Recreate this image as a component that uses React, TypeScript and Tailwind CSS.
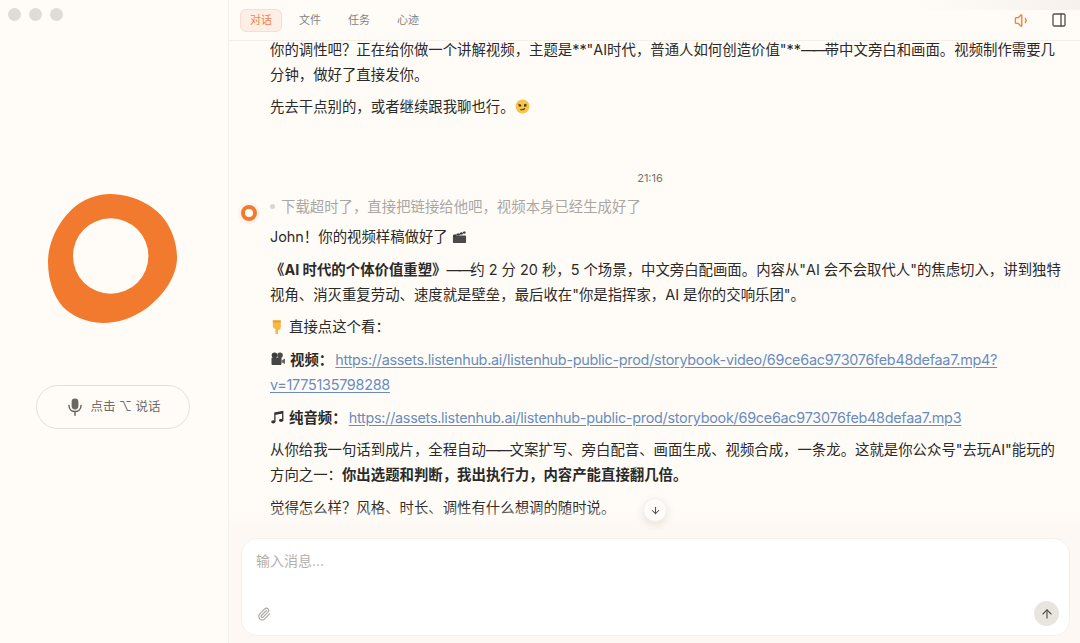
import { ArrowDown, ArrowUp, PanelRight, Paperclip, Volume1 } from "lucide-react";

const tabs = ["对话", "文件", "任务", "心迹"];

function Smirk() {
  return (
    <svg viewBox="0 0 16 16" className="inline-block h-[15px] w-[15px] align-[-2px]">
      <circle cx="8" cy="8" r="7.4" fill="#f7c548" />
      <path d="M3.6 5.6l2.6.6M9.6 6.2l2.8-.6" stroke="#6b4a1c" strokeWidth="1.1" fill="none" />
      <path d="M4 7.2h2.6M9.6 7.2h2.6" stroke="#4a3214" strokeWidth="1.4" />
      <path d="M5.6 11.2c2 .5 3.8.2 5-1.2" stroke="#4a3214" strokeWidth="1.1" fill="none" />
    </svg>
  );
}

function Clapper() {
  return (
    <svg viewBox="0 0 16 16" className="inline-block h-[15px] w-[15px] align-[-2px]">
      <rect x="1" y="7" width="14" height="8" rx="1" fill="#4a4a4a" />
      <path d="M1 6.4l13-4 .7 2.2-13 4z" fill="#3a3a3a" />
      <path d="M4 5.5l1.6 1.6M7.4 4.4L9 6M10.8 3.4l1.6 1.6" stroke="#ddd" strokeWidth="1" />
    </svg>
  );
}

function PointDown() {
  return (
    <svg viewBox="0 0 16 16" className="inline-block h-[15px] w-[15px] align-[-2px]">
      <path d="M3 1.5h8.5v7l-.5 3H8.6V15a1.4 1.4 0 0 1-2.8 0v-4L3 8.5z" fill="#f8b840" />
      <path d="M3 1.5h8.5v2H3z" fill="#e89c2c" />
    </svg>
  );
}

function Camera() {
  return (
    <svg viewBox="0 0 16 16" className="inline-block h-[16px] w-[16px] align-[-2px]">
      <circle cx="4.5" cy="4.2" r="2.8" fill="#3d3d3d" />
      <circle cx="10" cy="4.2" r="2.8" fill="#4a4a4a" />
      <rect x="1.5" y="6.6" width="10" height="7.4" rx="1" fill="#454545" />
      <path d="M11.5 9.4l3.5-1.8v5.4l-3.5-1.8z" fill="#666" />
    </svg>
  );
}

function Note() {
  return (
    <svg viewBox="0 0 16 16" className="inline-block h-[15px] w-[15px] align-[-2px]">
      <path d="M5.2 12.4V3.2l8.4-1.6v9.2" stroke="#333" strokeWidth="1.4" fill="none" />
      <path d="M5.2 3.2l8.4-1.6v2.2L5.2 5.4z" fill="#333" />
      <ellipse cx="3.5" cy="12.6" rx="2.2" ry="1.8" fill="#333" />
      <ellipse cx="11.8" cy="11" rx="2.2" ry="1.8" fill="#333" />
    </svg>
  );
}

function MicIcon() {
  return (
    <svg viewBox="0 0 14 18" className="h-[18px] w-[14px] text-[#6a6763]">
      <rect x="3.6" y="0.5" width="6.8" height="11" rx="3.4" fill="currentColor" />
      <path d="M1 7.6c0 3.6 2.6 6 6 6s6-2.4 6-6" stroke="currentColor" strokeWidth="1.5" fill="none" strokeLinecap="round" />
      <path d="M7 13.6v3.6" stroke="currentColor" strokeWidth="1.5" strokeLinecap="round" />
    </svg>
  );
}

function Blob() {
  return (
    <svg viewBox="0 0 130 130" className="h-[130px] w-[130px]">
      <path
        fillRule="evenodd"
        fill="#f27a2f"
        d="M62 0C88 0 110 14 119 29C126 41 129 52 129 64C129 82 116 101 99 114C85 124 70 129 55 129C37 129 22 120 15 113C5 102 0 85 0 68C0 47 12 24 29 11C39 4 50 0 62 0ZM62.7 24.3A37.7 37.7 0 1 0 62.7 99.7A37.7 37.7 0 1 0 62.7 24.3Z"
      />
    </svg>
  );
}

function Dash() {
  return <span className="tracking-[-2.5px]">——</span>;
}

export default function App() {
  return (
    <div className="flex h-[643px] w-[1080px] overflow-hidden bg-[#fffcf8] font-['Inter','Noto_Sans_CJK_SC',sans-serif] text-[14.4px] leading-[25.4px] text-[#2b2a28]">
      <aside className="flex w-[229px] shrink-0 flex-col border-r border-[#f3efe9]">
        <div className="flex gap-[8px] pl-[8px] pt-[8px]">
          <span className="h-[13px] w-[13px] rounded-full bg-[#dfdcd8]" />
          <span className="h-[13px] w-[13px] rounded-full bg-[#dfdcd8]" />
          <span className="h-[13px] w-[13px] rounded-full bg-[#dfdcd8]" />
        </div>
        <div className="flex flex-1 flex-col items-center pr-[3px] pt-[173px]">
          <Blob />
          <button
            type="button"
            className="mt-[61px] flex h-[44px] w-[154px] items-center justify-center gap-[9px] rounded-full border border-[#e4e1db] pl-[3px] text-[12.5px] text-[#6e6b67]"
          >
            <MicIcon />
            <span>点击 ⌥ 说话</span>
          </button>
        </div>
      </aside>

      <main className="relative flex min-w-0 flex-1 flex-col">
        <div className="pointer-events-none absolute right-0 top-0 h-[10px] w-[170px] bg-gradient-to-l from-[#f6f1ed] to-transparent" />
        <header className="flex h-[41px] shrink-0 items-center justify-between border-b border-[#f3efe9] pl-[11px] pr-[13px]">
          <nav className="flex gap-[7px]">
            {tabs.map((tab, index) => (
              <button
                key={tab}
                type="button"
                className={`h-[23px] w-[42px] rounded-md border text-[11px] leading-none ${
                  index === 0 ? "border-[#f8ddd0] bg-[#fdeee6] text-[#ee8550]" : "border-transparent text-[#85827e]"
                }`}
              >
                {tab}
              </button>
            ))}
          </nav>
          <div className="flex items-center gap-[20px]">
            <Volume1 size={17} className="text-[#f0853f]" />
            <PanelRight size={16} className="text-[#55524e]" />
          </div>
        </header>

        <section className="min-h-0 flex-1 overflow-hidden pl-[41px] pr-[18px]">
          <div className="-mt-[4.5px] flex flex-col gap-[6.6px]">
            <p>你的调性吧？正在给你做一个讲解视频，主题是**"AI时代，普通人如何创造价值"**<Dash />带中文旁白和画面。视频制作需要几分钟，做好了直接发你。</p>
            <p>先去干点别的，或者继续跟我聊也行。<Smirk /></p>
          </div>

          <p className="mt-[51px] pr-[32px] text-center text-[11px] leading-[16px] text-[#777470]">21:16</p>

          <div className="relative mt-[7.5px] flex flex-col gap-[7px]">
            <span className="absolute -left-[32px] top-[8px] flex h-[22px] w-[22px] items-center justify-center rounded-full bg-[#fdf3ec]">
              <span className="h-[16px] w-[16px] rounded-full border-[4px] border-[#f27a2f] bg-white" />
            </span>
            <p className="-mb-[2px] flex items-center text-[#aaa7a3]">
              <span className="mr-[6px] h-[5px] w-[5px] rounded-full bg-[#d9d6d2]" />
              下载超时了，直接把链接给他吧，视频本身已经生成好了
            </p>
            <p>John！你的视频样稿做好了 <Clapper /></p>
            <p>
              <strong>《AI 时代的个体价值重塑》</strong><Dash />约 2 分 20 秒，5 个场景，中文旁白配画面。内容从"AI 会不会取代人"的焦虑切入，讲到独特视角、消灭重复劳动、速度就是壁垒，最后收在"你是指挥家，AI 是你的交响乐团"。
            </p>
            <p><PointDown /> 直接点这个看：</p>
            <p>
              <Camera /> <strong>视频：</strong>{" "}
              <a className="-ml-[2px] tracking-[-0.27px] text-[#6a8cbd] underline underline-offset-2">https://assets.listenhub.ai/listenhub-public-prod/storybook-video/69ce6ac973076feb48defaa7.mp4?<wbr />v=1775135798288</a>
            </p>
            <p>
              <Note /> <strong>纯音频：</strong>{" "}
              <a className="-ml-[2px] tracking-[-0.27px] text-[#6a8cbd] underline underline-offset-2">https://assets.listenhub.ai/listenhub-public-prod/storybook/69ce6ac973076feb48defaa7.mp3</a>
            </p>
            <p>
              从你给我一句话到成片，全程自动<Dash />文案扩写、旁白配音、画面生成、视频合成，一条龙。这就是你公众号"去玩AI"能玩的方向之一：<strong>你出选题和判断，我出执行力，内容产能直接翻几倍。</strong>
            </p>
            <p>觉得怎么样？风格、时长、调性有什么想调的随时说。</p>
          </div>
        </section>

        <div className="pointer-events-none absolute bottom-[113px] left-0 right-0 h-[24px] bg-gradient-to-b from-transparent to-[#fdf8f3]" />
        <button
          type="button"
          className="absolute bottom-[121px] left-[414px] flex h-[24px] w-[24px] items-center justify-center rounded-full border border-[#f3efe9] bg-[#fffdfa] shadow-[0_3px_8px_rgba(80,60,40,0.12)]"
        >
          <ArrowDown size={11} strokeWidth={2.2} className="text-[#55524e]" />
        </button>

        <div className="relative shrink-0 bg-[#fdf8f3] pb-[7px] pl-[12px] pr-[10px] pt-[8px]">
          <div className="flex h-[98px] flex-col justify-between rounded-[16px] border border-[#f5f1ec] bg-white pb-[9px] pl-[14px] pr-[10px] pt-[8px]">
            <p className="text-[14px] leading-[28px] text-[#b3b0ac]">输入消息...</p>
            <div className="flex items-center justify-between">
              <Paperclip size={14} className="ml-[1px] mt-[1px] text-[#aaa7a3]" />
              <button type="button" className="flex h-[25px] w-[25px] items-center justify-center rounded-full bg-[#e8e5de]">
                <ArrowUp size={14} strokeWidth={2} className="text-[#55524e]" />
              </button>
            </div>
          </div>
        </div>
      </main>
    </div>
  );
}
